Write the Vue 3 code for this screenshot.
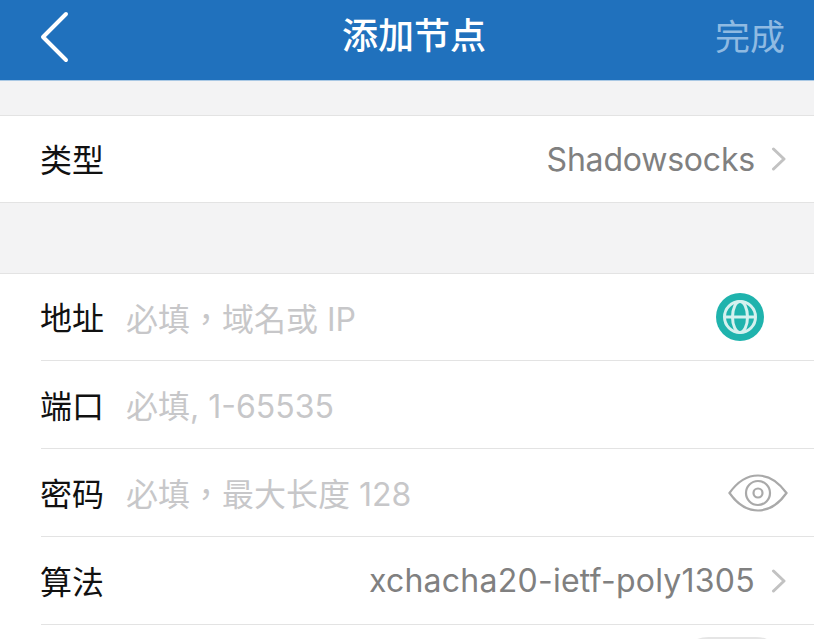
<script setup>
const fields = [
  { label: '地址', placeholder: '必填，域名或 IP', icon: 'globe' },
  { label: '端口', placeholder: '必填, 1-65535' },
  { label: '密码', placeholder: '必填，最大长度 128', icon: 'eye' }
]
</script>

<template>
  <div class="page">
    <header class="nav">
      <svg class="back" width="30" height="52" viewBox="0 0 30 52">
        <path d="M26 3 L3 26 L26 49" />
      </svg>
      <h1 class="title">添加节点</h1>
      <span class="done">完成</span>
    </header>

    <div class="gap small"></div>

    <section class="group">
      <div class="row first">
        <span class="label">类型</span>
        <span class="value">Shadowsocks</span>
        <svg class="chevron" width="16" height="24" viewBox="0 0 16 24"><path d="M2.5 2 L13 12 L2.5 22" /></svg>
      </div>
    </section>

    <div class="gap large"></div>

    <section class="group">
      <div v-for="f in fields" :key="f.label" class="row">
        <span class="label">{{ f.label }}</span>
        <input class="field" type="text" :placeholder="f.placeholder" />
        <svg v-if="f.icon === 'globe'" class="globe" width="50" height="50" viewBox="0 0 50 50">
          <circle cx="25" cy="25" r="24" fill="#1fb3ad" />
          <g fill="none" stroke="#d5f1ef" stroke-width="3">
            <circle cx="25" cy="25" r="15.5" />
            <ellipse cx="25" cy="25" rx="7.5" ry="15.5" />
            <path d="M9.5 25 H40.5" />
          </g>
        </svg>
        <svg v-if="f.icon === 'eye'" class="eye" width="60" height="38" viewBox="0 0 60 38">
          <g fill="none" stroke="#a9a9a9" stroke-width="2.2">
            <path d="M1.5 19 C10 7 19 1.5 30 1.5 C41 1.5 50 7 58.5 19 C50 31 41 36.5 30 36.5 C19 36.5 10 31 1.5 19 Z" />
            <circle cx="30" cy="19" r="12" />
            <circle cx="30" cy="19" r="4.5" />
          </g>
        </svg>
      </div>
      <div class="row">
        <span class="label">算法</span>
        <span class="value long">xchacha20-ietf-poly1305</span>
        <svg class="chevron" width="16" height="24" viewBox="0 0 16 24"><path d="M2.5 2 L13 12 L2.5 22" /></svg>
      </div>
      <div class="row last">
        <span class="switch"></span>
      </div>
    </section>
  </div>
</template>

<style>
html, body {
  margin: 0;
  overflow: hidden;
}
</style>

<style scoped>
.page {
  width: 814px;
  height: 639px;
  overflow: hidden;
  background: #f3f3f4;
  font-family: "Inter", "Noto Sans CJK SC", sans-serif;
}

.nav {
  height: 64px;
  display: grid;
  grid-template-columns: 1fr auto 1fr;
  align-items: center;
  padding: 0 29px 16px 43px;
  background: #2071bd;
  border-bottom: 1px solid #a9c8e4;
}

.back {
  margin: 9px 0 0 -3px;
}

.back path {
  fill: none;
  stroke: #fff;
  stroke-width: 4;
  stroke-linecap: round;
  stroke-linejoin: round;
}

.title {
  margin: 0;
  padding-top: 2px;
  color: #fff;
  font-size: 36px;
  font-weight: 500;
}

.done {
  justify-self: end;
  padding-top: 4px;
  color: #8fbae2;
  font-size: 35px;
}

.gap.small {
  height: 34px;
}

.gap.large {
  height: 70px;
}

.group {
  background: #fff;
  border-top: 1px solid #e3e3e3;
}

.row {
  height: 87px;
  margin-left: 41px;
  padding-right: 27px;
  display: flex;
  align-items: center;
  border-bottom: 1px solid #e3e3e3;
}

.row:first-child {
  height: 86px;
}

.row.first {
  margin-left: 0;
  padding-left: 41px;
}

.row.last {
  justify-content: flex-end;
  border-bottom: none;
}

.label {
  flex-shrink: 0;
  width: 86px;
  margin-left: -2px;
  padding: 0 0 2px 1px;
  color: #111;
  font-size: 32px;
}

.field {
  flex: 1;
  min-width: 0;
  padding: 4px 0 0;
  border: none;
  outline: none;
  background: none;
  font-family: "Inter", "Noto Sans CJK TC", sans-serif;
  font-size: 32px;
}

.field::placeholder {
  color: #c7c7c9;
  opacity: 1;
}

.value {
  margin-left: auto;
  color: #808080;
  font-size: 32px;
  letter-spacing: -0.2px;
}

.value.long {
  letter-spacing: 0.25px;
}

.chevron {
  margin-left: 16px;
}

.chevron path {
  fill: none;
  stroke: #c2c2c2;
  stroke-width: 3;
  stroke-linecap: round;
  stroke-linejoin: round;
}

.globe {
  margin-right: 22px;
}

.eye {
  margin-right: -1px;
}

.switch {
  width: 110px;
  height: 63px;
  box-sizing: border-box;
  border: 2px solid #e5e5e5;
  border-radius: 32px;
}
</style>
